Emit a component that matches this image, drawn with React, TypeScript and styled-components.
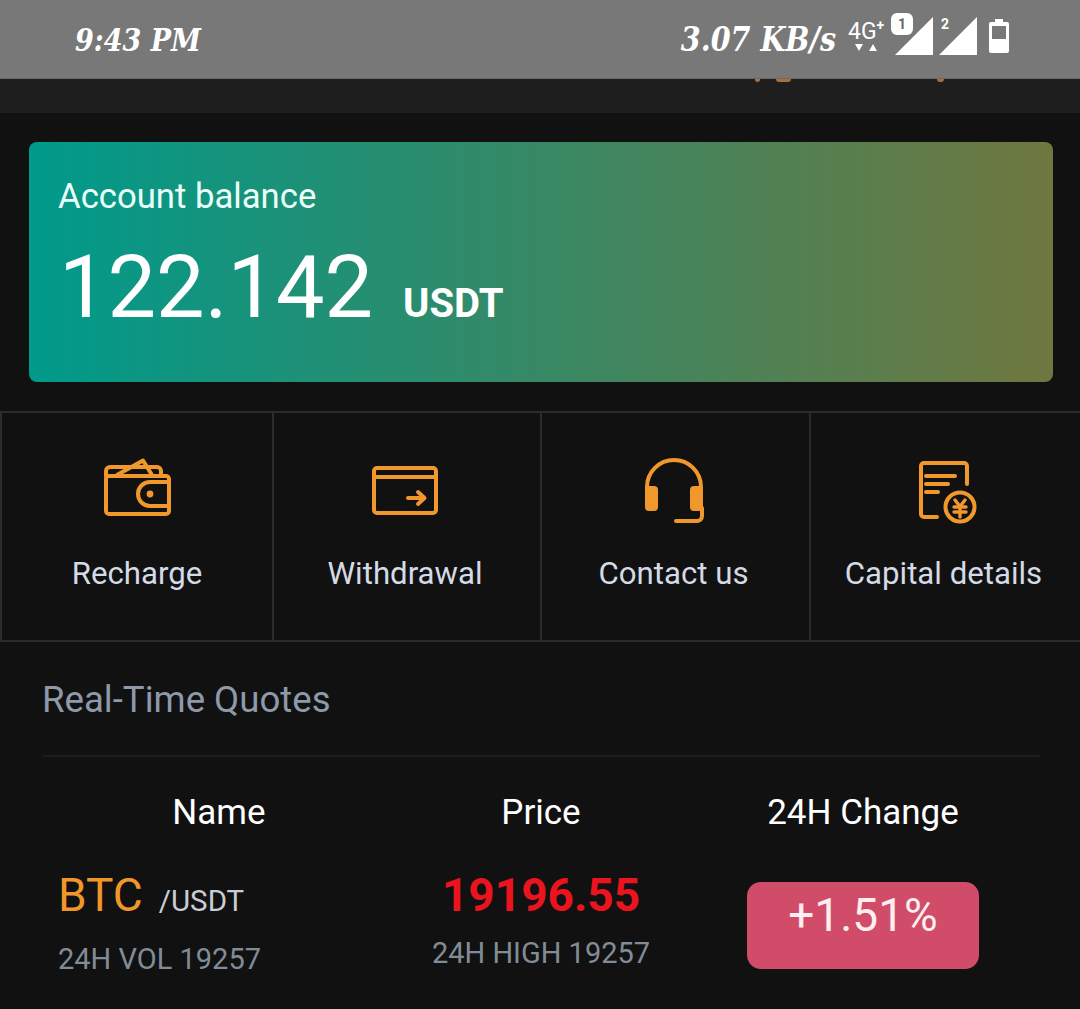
import React from "react";
import styled, { createGlobalStyle } from "styled-components";

const GlobalStyle = createGlobalStyle`
  html, body {
    margin: 0;
    padding: 0;
    background: #111112;
    overflow: hidden;
  }
  * { box-sizing: border-box; }
  body { font-family: Roboto, "Liberation Sans", sans-serif; }
`;

const Page = styled.div`
  width: 1080px;
  height: 1009px;
  overflow: hidden;
  background: #111112;
`;

const StatusBar = styled.div`
  height: 79px;
  background: #787878;
  border-bottom: 1px solid #6a6a6a;
  display: flex;
  align-items: center;
  padding: 0 71px 0 75px;
  color: #fff;
`;
const HandText = styled.span<{ size: number }>`
  font-family: "DejaVu Serif", serif;
  font-style: italic;
  font-weight: 700;
  font-size: ${p => p.size}px;
  line-height: 1;
  transform: scaleY(1.2);
  white-space: nowrap;
`;
const StatusRight = styled.div`
  margin-left: auto;
  display: flex;
  align-items: center;
`;
const Network = styled.div`
  margin-left: 12px;
  width: 38px;
  margin-top: -4px;
  display: flex;
  flex-direction: column;
  align-items: flex-start;
  font-size: 23px;
  line-height: 20px;
  white-space: nowrap;
  sup {
    font-size: 14px;
    line-height: 0;
    font-weight: 700;
  }
`;
const Arrows = styled.svg`
  margin-left: 7px;
  margin-top: 1px;
  display: block;
`;
const SignalWrap = styled.div<{ gap: number }>`
  position: relative;
  width: 38px;
  height: 38px;
  margin-left: ${p => p.gap}px;
  margin-top: -6px;
`;
const SimBadge = styled.span`
  position: absolute;
  left: -4px;
  top: -4px;
  width: 22px;
  height: 22px;
  border-radius: 6px;
  background: #fff;
  color: #666;
  font-size: 14px;
  font-weight: 700;
  line-height: 22px;
  text-align: center;
`;
const SimNum = styled.span`
  position: absolute;
  left: 2px;
  top: 0;
  color: #fff;
  font-size: 14px;
  font-weight: 700;
  line-height: 14px;
`;
const Battery = styled.svg`
  display: block;
  margin-left: 12px;
  margin-top: -6px;
`;

const TopHeader = styled.div`
  position: relative;
  height: 34px;
  background: #1e1e1e;
`;
const Clipped = styled.i<{ x: number; w: number; h: number }>`
  position: absolute;
  top: 0;
  left: ${p => p.x}px;
  width: ${p => p.w}px;
  height: ${p => p.h}px;
  background: #a8703a;
  border-radius: 0 0 ${p => p.w / 2}px ${p => p.w / 2}px;
`;

const Balance = styled.div`
  margin: 29px 27px 0 29px;
  height: 240px;
  border-radius: 8px;
  background: linear-gradient(90deg, #009a8b 0%, #6f773f 100%);
  padding: 34px 30px 0;
  color: #fff;
`;
const BalanceLabel = styled.div`
  font-size: 34.7px;
  line-height: 40px;
  color: #eafff9;
  margin-left: -1px;
`;
const BalanceRow = styled.div`
  display: flex;
  align-items: baseline;
  margin-top: 20px;
`;
const BalanceValue = styled.span`
  font-size: 86.4px;
  line-height: 104px;
  font-weight: 400;
`;
const BalanceUnit = styled.span`
  font-size: 40px;
  font-weight: 700;
  margin-left: 30px;
`;

const Actions = styled.div`
  margin-top: 29px;
  height: 231px;
  display: grid;
  grid-template-columns: 272px 268px 269px 271px;
  border-top: 2px solid #2b2b2c;
  border-bottom: 2px solid #2b2b2c;
`;
const Action = styled.div`
  border-left: 2px solid #2b2b2c;
  padding-right: 4px;
  display: flex;
  flex-direction: column;
  align-items: center;
  &:first-child {
    padding-right: 0;
  }
`;
const IconSlot = styled.div<{ top: number }>`
  height: 143px;
  padding-top: ${p => p.top}px;
  display: flex;
  justify-content: center;
  svg { display: block; }
`;
const ActionLabel = styled.div`
  font-size: 31.2px;
  line-height: 36px;
  color: #d4dae6;
  white-space: nowrap;
`;

const Quotes = styled.div`
  padding: 0 40px 0 43px;
`;
const QuotesTitle = styled.div`
  height: 115px;
  padding-top: 38px;
  border-bottom: 2px solid #1d1d1e;
  font-size: 36.6px;
  line-height: 40px;
  color: #8e9aa9;
  text-indent: -1px;
`;
const Table = styled.div`
  padding: 0 16px 0 15px;
`;
const Row = styled.div`
  display: grid;
  grid-template-columns: repeat(3, 322px);
`;
const HeadCell = styled.div`
  height: 117px;
  padding-top: 36px;
  text-align: center;
  font-size: 35px;
  line-height: 40px;
  color: #fff;
`;
const NameCell = styled.div`
  margin-top: -6px;
`;
const Pair = styled.div`
  display: flex;
  align-items: baseline;
`;
const Coin = styled.span`
  font-size: 46px;
  line-height: 54px;
  color: #f0972b;
`;
const Quote = styled.span`
  font-size: 29.5px;
  color: #c9ced6;
  margin-left: 16px;
`;
const Sub = styled.div`
  font-size: 29px;
  line-height: 36px;
  color: #818c97;
  white-space: nowrap;
`;
const NameSub = styled(Sub)`
  margin-top: 19px;
`;
const PriceCell = styled.div`
  margin-top: -6px;
  text-align: center;
`;
const Price = styled.div`
  font-size: 46px;
  line-height: 54px;
  font-weight: 700;
  color: #e9141d;
`;
const PriceSub = styled(Sub)`
  margin-top: 13px;
  font-size: 29px;
`;
const ChangeCell = styled.div`
  display: flex;
  justify-content: center;
`;
const Badge = styled.div`
  width: 232px;
  height: 87px;
  margin-top: 8px;
  border-radius: 14px;
  background: #d04c69;
  color: #fdeef0;
  font-size: 46px;
  line-height: 66px;
  text-align: center;
`;

const orange = "#f0982c";

function WalletIcon() {
  return (
    <svg width="68" height="60" viewBox="0 0 68 60" fill="none" stroke={orange} strokeWidth="4" strokeLinejoin="round" strokeLinecap="round">
      <rect x="3" y="19" width="63" height="38" rx="3" />
      <path d="M3 19v-5a4 4 0 0 1 4-4h47a4 4 0 0 1 4 4v5" />
      <path d="M14 18L40 3.5L49 18" />
      <path d="M66 25H47a12 12 0 0 0 0 24h19" />
      <circle cx="47" cy="37" r="3.4" fill={orange} stroke="none" />
    </svg>
  );
}

function WithdrawIcon() {
  return (
    <svg width="68" height="52" viewBox="0 0 68 52" fill="none" stroke={orange} strokeWidth="4" strokeLinejoin="round" strokeLinecap="round">
      <rect x="3" y="4" width="62" height="45" rx="3" />
      <path d="M3 13h62" />
      <path d="M37 34h16M47 28l6.5 6L47 40" />
    </svg>
  );
}

function HeadsetIcon() {
  return (
    <svg width="62" height="70" viewBox="0 0 62 70" fill="none" stroke={orange} strokeWidth="4" strokeLinecap="round">
      <path d="M4 33v-2a27 27 0 0 1 54 0v2" />
      <rect x="2" y="30" width="13" height="25" rx="4" fill={orange} stroke="none" />
      <rect x="47" y="30" width="13" height="25" rx="4" fill={orange} stroke="none" />
      <path d="M59 52v8a5 5 0 0 1-5 5H33" />
    </svg>
  );
}

function DetailsIcon() {
  return (
    <svg width="71" height="66" viewBox="-9 0 71 66" fill="none" stroke={orange} strokeWidth="4" strokeLinecap="round" strokeLinejoin="round">
      <path d="M50 24V6a3 3 0 0 0-3-3H7a3 3 0 0 0-3 3v48a3 3 0 0 0 3 3h13" />
      <path d="M9 16h29M9 24h22M9 32h12" />
      <circle cx="43" cy="47" r="14.5" />
      <path d="M38 40l5 6.5 5-6.5M37 47h12M37 52h12M43 46v11" strokeWidth="3.4" />
    </svg>
  );
}

function Signal() {
  return (
    <svg width="38" height="38" viewBox="0 0 38 38">
      <path d="M38 0V38H0Z" fill="#fff" />
    </svg>
  );
}

const actions = [
  { label: "Recharge", top: 44, icon: <WalletIcon /> },
  { label: "Withdrawal", top: 51, icon: <WithdrawIcon /> },
  { label: "Contact us", top: 43, icon: <HeadsetIcon /> },
  { label: "Capital details", top: 47, icon: <DetailsIcon /> },
];

export default function App() {
  return (
    <Page>
      <GlobalStyle />
      <StatusBar>
        <HandText size={27}>9:43 PM</HandText>
        <StatusRight>
          <HandText size={28.6}>3.07 KB/s</HandText>
          <Network>
            <span>4G<sup>+</sup></span>
            <Arrows width="24" height="9" viewBox="0 0 24 9">
              <path d="M0 1h8L4 8ZM14 8h8L18 1Z" fill="#fff" />
            </Arrows>
          </Network>
          <SignalWrap gap={9}>
            <Signal />
            <SimBadge>1</SimBadge>
          </SignalWrap>
          <SignalWrap gap={6}>
            <Signal />
            <SimNum>2</SimNum>
          </SignalWrap>
          <Battery width="20" height="34" viewBox="0 0 20 34">
            <path d="M6 0h8v3h4a2 2 0 0 1 2 2v27a2 2 0 0 1-2 2H2a2 2 0 0 1-2-2V5a2 2 0 0 1 2-2h4Z" fill="#fff" />
            <rect x="3" y="7" width="14" height="13" fill="#787878" />
          </Battery>
        </StatusRight>
      </StatusBar>
      <TopHeader>
        <Clipped x={755} w={5} h={3} />
        <Clipped x={776} w={15} h={3} />
        <Clipped x={937} w={7} h={3} />
      </TopHeader>

      <Balance>
        <BalanceLabel>Account balance</BalanceLabel>
        <BalanceRow>
          <BalanceValue>122.142</BalanceValue>
          <BalanceUnit>USDT</BalanceUnit>
        </BalanceRow>
      </Balance>

      <Actions>
        {actions.map(a => (
          <Action key={a.label}>
            <IconSlot top={a.top}>{a.icon}</IconSlot>
            <ActionLabel>{a.label}</ActionLabel>
          </Action>
        ))}
      </Actions>

      <Quotes>
        <QuotesTitle>Real-Time Quotes</QuotesTitle>
        <Table>
          <Row>
            <HeadCell>Name</HeadCell>
            <HeadCell>Price</HeadCell>
            <HeadCell>24H Change</HeadCell>
          </Row>
          <Row>
            <NameCell>
              <Pair>
                <Coin>BTC</Coin>
                <Quote>/USDT</Quote>
              </Pair>
              <NameSub>24H VOL 19257</NameSub>
            </NameCell>
            <PriceCell>
              <Price>19196.55</Price>
              <PriceSub>24H HIGH 19257</PriceSub>
            </PriceCell>
            <ChangeCell>
              <Badge>+1.51%</Badge>
            </ChangeCell>
          </Row>
        </Table>
      </Quotes>
    </Page>
  );
}
